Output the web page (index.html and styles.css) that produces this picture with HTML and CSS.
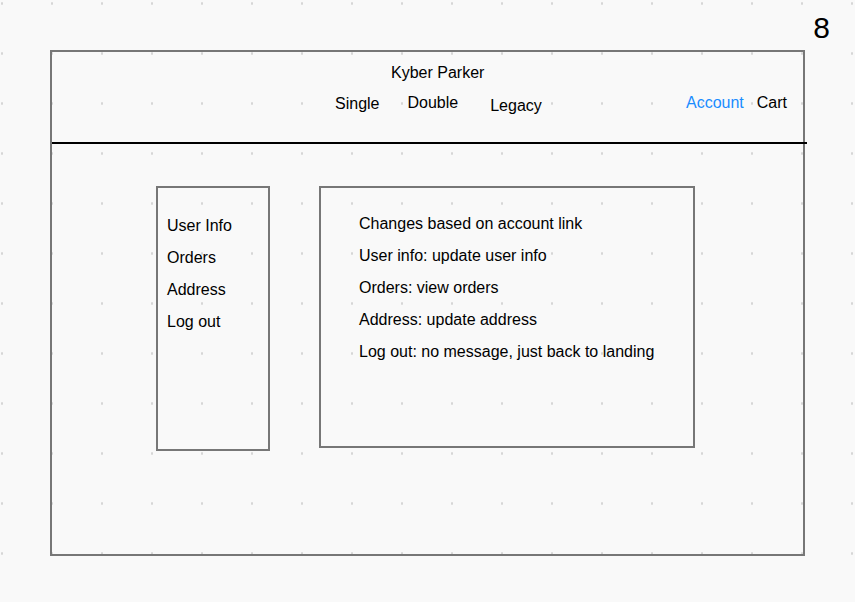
FILE: index.html
```html
<!DOCTYPE html>
<html lang="en">
<head>
<meta charset="utf-8">
<title>Account wireframe</title>
<link rel="stylesheet" href="styles.css">
</head>
<body>
  <div class="topbar"><span class="page-num">8</span></div>
  <div class="frame">
    <header class="header">
      <div class="title">Kyber Parker</div>
      <nav class="nav">
        <span class="nav-item single">Single</span>
        <span class="nav-item double">Double</span>
        <span class="nav-item legacy">Legacy</span>
        <span class="nav-item account">Account</span>
        <span class="nav-item cart">Cart</span>
      </nav>
    </header>
    <main class="body">
      <ul class="sidebar">
        <li>User Info</li>
        <li>Orders</li>
        <li>Address</li>
        <li>Log out</li>
      </ul>
      <section class="content">
        <p>Changes based on account link</p>
        <p>User info: update user info</p>
        <p>Orders: view orders</p>
        <p>Address: update address</p>
        <p>Log out: no message, just back to landing</p>
      </section>
    </main>
  </div>
</body>
</html>
```

FILE: styles.css
```css
* { box-sizing: border-box; }

html, body {
  margin: 0;
  padding: 0;
}

body {
  width: 855px;
  height: 602px;
  overflow: hidden;
  background-color: #f9f9f9;
  background-image: radial-gradient(circle at 2px 3.5px, #d6d6d6 0, #d6d6d6 1px, rgba(214,214,214,0) 1.4px);
  background-size: 50px 50px;
  background-position: 0 0;
  font-family: "Liberation Sans", Arial, Helvetica, sans-serif;
  font-size: 16px;
  line-height: 18px;
  color: #000;
}

.topbar {
  height: 50px;
  display: flex;
  justify-content: flex-end;
  padding: 11px 25px 0 0;
}

.page-num {
  font-size: 30px;
  line-height: 34px;
}

.frame {
  margin-left: 50px;
  width: 755px;
  height: 506px;
  border: 2px solid #777;
}

.header {
  height: 92px;
  margin-right: -4px;
  border-bottom: 2px solid #000;
  padding-top: 12px;
}

.title {
  margin-left: 339px;
}

.nav {
  display: flex;
  align-items: flex-start;
  margin-top: 12px;
  padding-right: 20px;
}

.nav-item { white-space: nowrap; }

.single { margin-left: 283px; margin-top: 1px; }
.double { margin-left: 28px; }
.legacy { margin-left: 32px; margin-top: 3px; }
.account { margin-left: auto; color: #1a8cff; }
.cart { margin-left: 13px; }

.body {
  display: flex;
  align-items: flex-start;
  padding: 42px 0 0 104px;
}

.sidebar {
  list-style: none;
  margin: 0;
  width: 114px;
  height: 265px;
  border: 2px solid #777;
  padding: 29px 0 0 9px;
  display: flex;
  flex-direction: column;
  gap: 14px;
}

.content {
  margin-left: 49px;
  width: 376px;
  height: 262px;
  border: 2px solid #777;
  padding: 27px 0 0 38px;
  display: flex;
  flex-direction: column;
  gap: 14px;
}

.content p { margin: 0; white-space: nowrap; }
```
